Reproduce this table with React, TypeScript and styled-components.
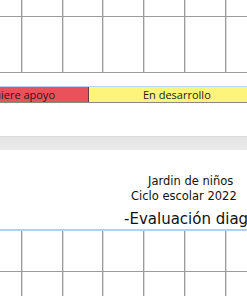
import React from "react";
import styled, { createGlobalStyle } from "styled-components";

const Global = createGlobalStyle`
  html, body { margin: 0; padding: 0; background: #ffffff; }
  body { width: 247px; height: 296px; overflow: hidden; font-family: "Open Sans", "Liberation Sans", sans-serif; }
`;

const Screen = styled.div`
  width: 247px;
  height: 296px;
  overflow: hidden;
  display: flex;
  flex-direction: column;
  background: #ffffff;
`;

const COLS = "22px 41px 40px 41px 41px 41px 41px";

const Grid = styled.div<{ $rows: string }>`
  display: grid;
  grid-template-columns: ${COLS};
  grid-template-rows: ${(p) => p.$rows};
  width: 267px;
  flex-shrink: 0;
`;

const Cell = styled.div<{ $bottom?: boolean }>`
  border-right: 1px solid #9c9c9c;
  border-bottom: ${(p) => (p.$bottom ? "1px solid #9c9c9c" : "none")};
  box-shadow: 1px 0 0 #dcdcdc;
`;

const Spacer = styled.div<{ $h: number }>`
  height: ${(p) => p.$h}px;
  flex-shrink: 0;
`;

const LegendBar = styled.div`
  display: flex;
  height: 15px;
  flex-shrink: 0;
  border-top: 1px solid #b9d5f2;
  border-bottom: 1px solid #8a8a7c;
  font-size: 11px;
  line-height: 15px;
  color: #1c1c1c;
  white-space: nowrap;
`;

const LegendCell = styled.div<{ $bg: string; $width: number; $pad: number; $end?: boolean }>`
  width: ${(p) => p.$width}px;
  flex-shrink: 0;
  background: ${(p) => p.$bg};
  overflow: hidden;
  display: flex;
  justify-content: ${(p) => (p.$end ? "flex-end" : "flex-start")};
  padding-left: ${(p) => (p.$end ? 0 : p.$pad)}px;
  padding-right: ${(p) => (p.$end ? p.$pad : 0)}px;
  box-sizing: border-box;
  border-right: ${(p) => (p.$end ? "1px solid #6e3a3a" : "none")};
`;

const PageGap = styled.div`
  height: 14px;
  flex-shrink: 0;
  background: linear-gradient(#d6d6d6 0px, #e4e4e4 1px, #ebebeb 14px);
`;

const TitleBlock = styled.div`
  height: 79px;
  flex-shrink: 0;
  display: flex;
  flex-direction: column;
  justify-content: flex-end;
  box-sizing: border-box;
  font-family: "DejaVu Sans", "Noto Sans", sans-serif;
  color: #111111;
  white-space: nowrap;
  overflow: hidden;
`;

const TitleLine = styled.div<{ $indent: number; $size: number; $lh: number; $gap?: number }>`
  padding-left: ${(p) => p.$indent}px;
  font-size: ${(p) => p.$size}px;
  line-height: ${(p) => p.$lh}px;
  margin-bottom: ${(p) => p.$gap ?? 0}px;
`;

const BlueRule = styled.div`
  height: 2px;
  flex-shrink: 0;
  background: #b4d0ef;
`;

const cols = Array.from({ length: 7 });

export default function App() {
  return (
    <Screen>
      <Global />
      <Grid $rows="17px 56px">
        {cols.map((_, i) => (
          <Cell key={`a${i}`} $bottom />
        ))}
        {cols.map((_, i) => (
          <Cell key={`b${i}`} $bottom />
        ))}
      </Grid>
      <Spacer $h={13} />
      <LegendBar>
        <LegendCell $bg="#e9525a" $width={89} $pad={33} $end>
          Requiere apoyo
        </LegendCell>
        <LegendCell $bg="#fdf47c" $width={158} $pad={54}>
          En desarrollo
        </LegendCell>
      </LegendBar>
      <Spacer $h={33} />
      <PageGap />
      <TitleBlock>
        <TitleLine $indent={148} $size={11.5} $lh={15}>
          Jardin de niños
        </TitleLine>
        <TitleLine $indent={131} $size={11.5} $lh={15} $gap={5}>
          Ciclo escolar 2022
        </TitleLine>
        <TitleLine $indent={124} $size={15} $lh={20}>
          -Evaluación diagnóstica
        </TitleLine>
      </TitleBlock>
      <BlueRule />
      <Grid $rows="41px 40px">
        {cols.map((_, i) => (
          <Cell key={`c${i}`} $bottom />
        ))}
        {cols.map((_, i) => (
          <Cell key={`d${i}`} />
        ))}
      </Grid>
    </Screen>
  );
}
